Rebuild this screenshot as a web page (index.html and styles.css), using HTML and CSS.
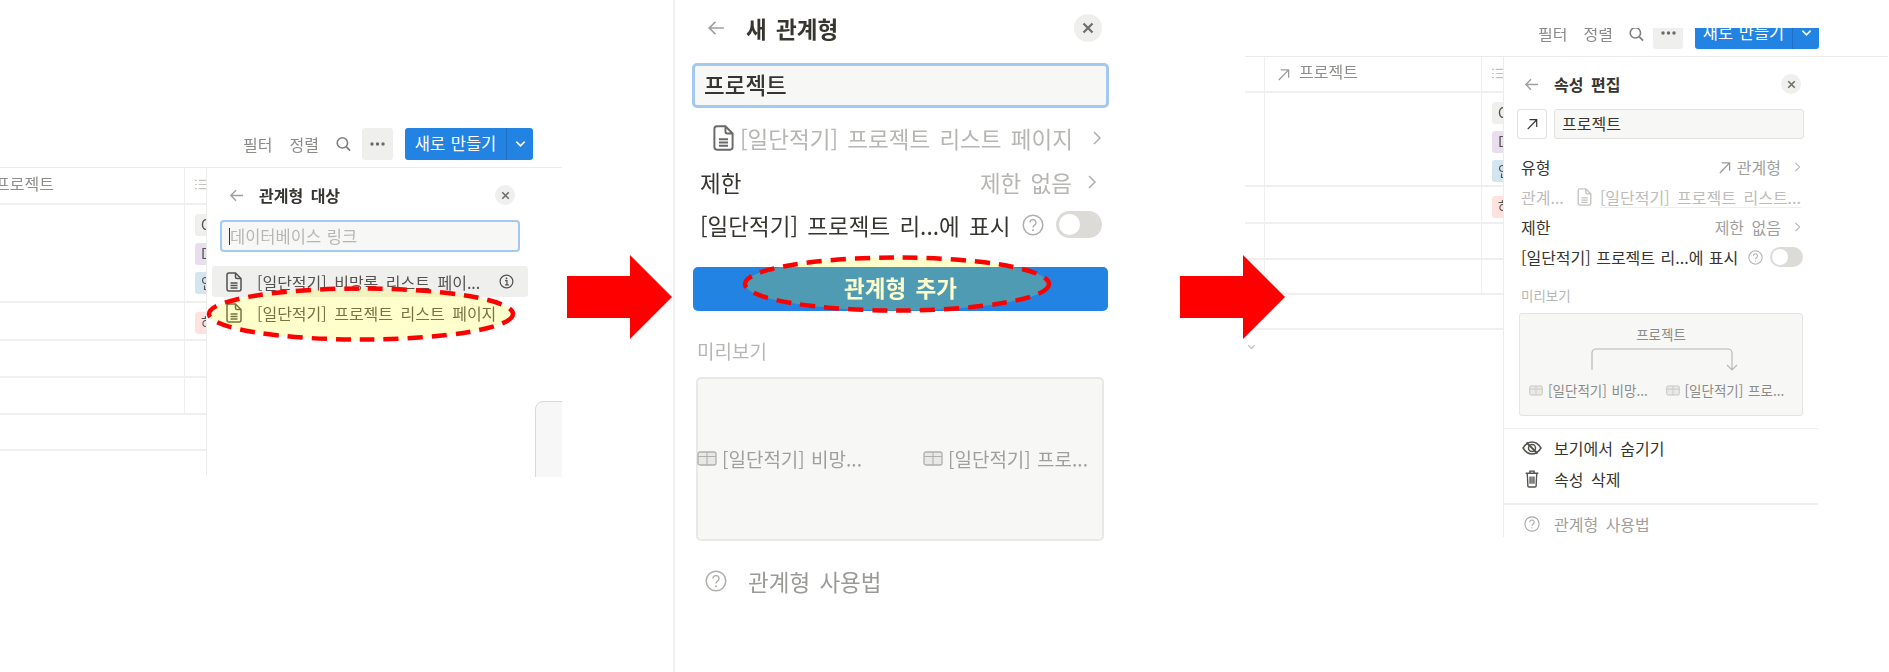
FILE: index.html
```html
<!DOCTYPE html>
<html lang="ko">

<head>
    <meta charset="utf-8">
    <title>관계형 추가</title>
    <link rel="stylesheet" href="styles.css">
</head>

<body>
    <svg class="defs" width="0" height="0">
        <symbol id="i-back" viewBox="0 0 16 16"><path d="M15 8H2M7.500 2.500 2 8l5.500 5.500" fill="none" stroke="currentColor" stroke-width="1.500"/></symbol>
        <symbol id="i-close" viewBox="0 0 16 16"><path d="M4 4l8 8M12 4l-8 8" fill="none" stroke="currentColor" stroke-width="2"/></symbol>
        <symbol id="i-doc" viewBox="0 0 16 20"><path d="M3 1h6.500L15 6.500V17a2 2 0 0 1-2 2H3a2 2 0 0 1-2-2V3a2 2 0 0 1 2-2zM9.500 1v4a1.500 1.500 0 0 0 1.500 1.500h4M4.500 11h7M4.500 13.500h7M4.500 16h7" fill="none" stroke="currentColor" stroke-width="1.500"/></symbol>
        <symbol id="i-chev" viewBox="0 0 10 16"><path d="M2 2l6 6-6 6" fill="none" stroke="currentColor" stroke-width="1.500"/></symbol>
        <symbol id="i-down" viewBox="0 0 12 8"><path d="M1.500 1.500 6 6l4.500-4.500" fill="none" stroke="currentColor" stroke-width="1.800"/></symbol>
        <symbol id="i-help" viewBox="0 0 22 22"><circle cx="11" cy="11" r="9.800" fill="none" stroke="currentColor" stroke-width="1.500"/><path d="M8 8.500a3 3 0 1 1 4.600 2.500c-1 .7-1.600 1.200-1.600 2.500" fill="none" stroke="currentColor" stroke-width="1.500"/><circle cx="11" cy="16.300" r="1" fill="currentColor"/></symbol>
        <symbol id="i-info" viewBox="0 0 16 16"><circle cx="8" cy="8" r="6.800" fill="none" stroke="currentColor" stroke-width="1.300"/><path d="M6.500 7H8.500V11.500M6.500 11.500h4" fill="none" stroke="currentColor" stroke-width="1.300"/><circle cx="8" cy="4.700" r="1" fill="currentColor"/></symbol>
        <symbol id="i-table" viewBox="0 0 20 15"><rect x="1" y="1" width="18" height="13" rx="2" fill="#e8e8e5" stroke="currentColor" stroke-width="1.300"/><path d="M1 5.500h18M10 1V14" fill="none" stroke="currentColor" stroke-width="1.100"/></symbol>
        <symbol id="i-rel" viewBox="0 0 14 14"><path d="M2 13 12.500 2M4 2h8.500v8.500" fill="none" stroke="currentColor" stroke-width="1.400"/></symbol>
        <symbol id="i-search" viewBox="0 0 16 16"><circle cx="6.800" cy="6.800" r="5.500" fill="none" stroke="currentColor" stroke-width="1.700"/><path d="M10.800 10.800 15 15" fill="none" stroke="currentColor" stroke-width="1.900"/></symbol>
        <symbol id="i-dots" viewBox="0 0 15 4"><circle cx="2" cy="2" r="1.700" fill="currentColor"/><circle cx="7.500" cy="2" r="1.700" fill="currentColor"/><circle cx="13" cy="2" r="1.700" fill="currentColor"/></symbol>
        <symbol id="i-list" viewBox="0 0 14 14"><path d="M4 2.500h10M4 7h10M4 11.500h10M0 2.500h2M0 7h2M0 11.500h2" fill="none" stroke="currentColor" stroke-width="1.300"/></symbol>
        <symbol id="i-eye" viewBox="0 0 20 16"><path d="M1 8c2.500-4 5.500-6 9-6s6.500 2 9 6c-2.500 4-5.500 6-9 6s-6.500-2-9-6z" fill="none" stroke="currentColor" stroke-width="1.500"/><circle cx="10" cy="8" r="3.500" fill="none" stroke="currentColor" stroke-width="1.500"/><path d="M4.500 2.500l11 11" fill="none" stroke="currentColor" stroke-width="1.800"/></symbol>
        <symbol id="i-trash" viewBox="0 0 14 18"><path d="M1 4h12M5 4V2h4v2M2.500 4l.6 12a1 1 0 0 0 1 1h5.800a1 1 0 0 0 1-1l.6-12M5.200 7v7M7 7v7M8.800 7v7" fill="none" stroke="currentColor" stroke-width="1.300"/></symbol>
    </svg>

    <div class="page">
        <!-- first capture: choosing the relation target -->
        <section class="shot shot-left">
            <div class="toolbar">
                <span class="tool-text">필터</span>
                <span class="tool-text">정렬</span>
                <svg class="tool-search"><use href="#i-search"/></svg>
                <span class="tool-more"><svg><use href="#i-dots"/></svg></span>
                <span class="new-btn"><span class="new-label">새로 만들기</span><span class="new-drop"><svg><use href="#i-down"/></svg></span></span>
            </div>
            <div class="work">
                <div class="table table-left">
                    <div class="tr tr-head">
                        <div class="td td-main"><span class="col-title col-clip">프로젝트</span></div>
                        <div class="td td-side"><svg class="list-icon"><use href="#i-list"/></svg></div>
                    </div>
                    <div class="tr tr-tall">
                        <div class="td td-main"></div>
                        <div class="td td-side tags">
                            <span class="tag tag-gray">O</span>
                            <span class="tag tag-purple">D</span>
                            <span class="tag tag-blue">인</span>
                        </div>
                    </div>
                    <div class="tr tr-a">
                        <div class="td td-main"></div>
                        <div class="td td-side tags"><span class="tag tag-red">하</span></div>
                    </div>
                    <div class="tr tr-b">
                        <div class="td td-main"></div>
                        <div class="td td-side"></div>
                    </div>
                    <div class="tr tr-b">
                        <div class="td td-main"></div>
                        <div class="td td-side"></div>
                    </div>
                    <div class="tr tr-c"></div>
                </div>
                <div class="panel panel-left">
                    <div class="head">
                        <svg class="back"><use href="#i-back"/></svg>
                        <span class="head-title">관계형 대상</span>
                        <span class="close"><svg><use href="#i-close"/></svg></span>
                    </div>
                    <div class="search-box"><span class="caret"></span><span>데이터베이스 링크</span></div>
                    <div class="pick pick-hover">
                        <svg class="pick-doc"><use href="#i-doc"/></svg>
                        <span class="pick-text">[일단적기] 비망록 리스트 페이...</span>
                        <svg class="pick-info"><use href="#i-info"/></svg>
                    </div>
                    <div class="pick">
                        <svg class="pick-doc"><use href="#i-doc"/></svg>
                        <span class="pick-text">[일단적기] 프로젝트 리스트 페이지</span>
                    </div>
                    <div class="float-card"></div>
                </div>
            </div>
        </section>

        <!-- second capture: new relation, zoomed in -->
        <section class="shot shot-mid">
            <div class="m-head">
                <svg class="m-back"><use href="#i-back"/></svg>
                <span class="m-title">새 관계형</span>
                <span class="m-close"><svg><use href="#i-close"/></svg></span>
            </div>
            <div class="m-input">프로젝트</div>
            <div class="m-row m-row-doc">
                <svg class="m-doc"><use href="#i-doc"/></svg>
                <span class="m-muted m-grow">[일단적기] 프로젝트 리스트 페이지</span>
                <svg class="m-chev"><use href="#i-chev"/></svg>
            </div>
            <div class="m-row m-row-limit">
                <span class="m-grow">제한</span>
                <span class="m-muted">제한 없음</span>
                <svg class="m-chev"><use href="#i-chev"/></svg>
            </div>
            <div class="m-row">
                <span>[일단적기] 프로젝트 리...에 표시</span>
                <svg class="m-help"><use href="#i-help"/></svg>
                <span class="toggle m-toggle"></span>
            </div>
            <div class="m-add">관계형 추가</div>
            <div class="m-label">미리보기</div>
            <div class="m-preview">
                <div class="m-link"><svg class="m-table"><use href="#i-table"/></svg>[일단적기] 비망...</div>
                <div class="m-link"><svg class="m-table"><use href="#i-table"/></svg>[일단적기] 프로...</div>
            </div>
            <div class="m-guide">
                <svg class="m-help"><use href="#i-help"/></svg>
                <span>관계형 사용법</span>
            </div>
        </section>

        <!-- third capture: the finished property -->
        <section class="shot shot-right">
            <div class="toolbar toolbar-cut">
                <span class="tool-text">필터</span>
                <span class="tool-text">정렬</span>
                <svg class="tool-search"><use href="#i-search"/></svg>
                <span class="tool-more"><svg><use href="#i-dots"/></svg></span>
                <span class="new-btn"><span class="new-label">새로 만들기</span><span class="new-drop"><svg><use href="#i-down"/></svg></span></span>
            </div>
            <div class="work">
                <div class="table table-right">
                    <div class="tr tr-head">
                        <div class="td td-stub"></div>
                        <div class="td td-main"><svg class="rel-icon"><use href="#i-rel"/></svg><span class="col-title">프로젝트</span></div>
                        <div class="td td-side"><svg class="list-icon"><use href="#i-list"/></svg></div>
                    </div>
                    <div class="tr tr-tall">
                        <div class="td td-stub"></div>
                        <div class="td td-main"></div>
                        <div class="td td-side tags">
                            <span class="tag tag-gray">O</span>
                            <span class="tag tag-purple">D</span>
                            <span class="tag tag-blue">인</span>
                        </div>
                    </div>
                    <div class="tr tr-a">
                        <div class="td td-stub"></div>
                        <div class="td td-main"></div>
                        <div class="td td-side tags"><span class="tag tag-red">하</span></div>
                    </div>
                    <div class="tr tr-b">
                        <div class="td td-stub"></div>
                        <div class="td td-main"></div>
                        <div class="td td-side"></div>
                    </div>
                    <div class="tr tr-b">
                        <div class="td td-stub"></div>
                        <div class="td td-main"></div>
                        <div class="td td-side"></div>
                    </div>
                    <div class="tr tr-c"></div>
                    <svg class="more-rows"><use href="#i-down"/></svg>
                </div>
                <div class="panel panel-right">
                    <div class="head">
                        <svg class="back"><use href="#i-back"/></svg>
                        <span class="head-title">속성 편집</span>
                        <span class="close"><svg><use href="#i-close"/></svg></span>
                    </div>
                    <div class="name-row">
                        <span class="name-icon"><svg><use href="#i-rel"/></svg></span>
                        <span class="name-input">프로젝트</span>
                    </div>
                    <div class="prop">
                        <span class="prop-grow">유형</span>
                        <svg class="prop-rel"><use href="#i-rel"/></svg>
                        <span class="muted">관계형</span>
                        <svg class="prop-chev"><use href="#i-chev"/></svg>
                    </div>
                    <div class="prop">
                        <span class="faint prop-key">관계...</span>
                        <svg class="prop-doc"><use href="#i-doc"/></svg>
                        <span class="faint prop-target">[일단적기] 프로젝트 리스트...</span>
                    </div>
                    <div class="prop">
                        <span class="prop-grow">제한</span>
                        <span class="muted">제한 없음</span>
                        <svg class="prop-chev"><use href="#i-chev"/></svg>
                    </div>
                    <div class="prop prop-show">
                        <span>[일단적기] 프로젝트 리...에 표시</span>
                        <svg class="prop-help"><use href="#i-help"/></svg>
                        <span class="toggle"></span>
                    </div>
                    <div class="prev-label">미리보기</div>
                    <div class="prev-card">
                        <div class="prev-name">프로젝트</div>
                        <svg class="prev-line" viewBox="0 0 144 24"><path d="M2 23V6a4 4 0 0 1 4-4h132a4 4 0 0 1 4 4v17M137 18l5 5 5-5" fill="none" stroke="#b9b8b5" stroke-width="1.200"/></svg>
                        <div class="prev-links">
                            <span class="prev-link"><svg><use href="#i-table"/></svg>[일단적기] 비망...</span>
                            <span class="prev-link"><svg><use href="#i-table"/></svg>[일단적기] 프로...</span>
                        </div>
                    </div>
                    <div class="action action-first"><svg class="action-eye"><use href="#i-eye"/></svg><span>보기에서 숨기기</span></div>
                    <div class="action action-last"><svg class="action-trash"><use href="#i-trash"/></svg><span>속성 삭제</span></div>
                    <div class="action action-guide"><svg class="action-help"><use href="#i-help"/></svg><span>관계형 사용법</span></div>
                </div>
            </div>
        </section>

        <!-- annotations drawn over the captures -->
        <svg class="mark arrow-one" viewBox="0 0 105 84"><path d="M0 21H63V0L105 42 63 84V63H0z" fill="#f00"/></svg>
        <svg class="mark arrow-two" viewBox="0 0 105 84"><path d="M0 21H63V0L105 42 63 84V63H0z" fill="#f00"/></svg>
        <svg class="mark ring-one" viewBox="0 0 310 56"><ellipse cx="155" cy="28" rx="152" ry="25.500" fill="rgba(255,255,0,.2)" stroke="#f00" stroke-width="4.500" stroke-dasharray="15 9"/></svg>
        <svg class="mark ring-two" viewBox="0 0 310 58"><ellipse cx="155" cy="29" rx="152" ry="26.500" fill="rgba(255,255,0,.2)" stroke="#f00" stroke-width="4.500" stroke-dasharray="15 9"/></svg>
    </div>
</body>

</html>
```

FILE: styles.css
```css
body {
    margin: 0;
    background-color: #fff;
    color: #37352f;
    font-family: "Noto Sans CJK KR", "Noto Sans", sans-serif;
    font-size: 16px;
    word-spacing: 3px;
    overflow: hidden;
}

svg {
    display: block;
    flex: none;
}

.defs {
    position: absolute;
}

.page {
    position: relative;
    display: flex;
    width: 1889px;
    height: 672px;
    overflow: hidden;
}

.shot {
    filter: blur(0.45px);
    overflow: hidden;
}

.shot-left {
    width: 562px;
    height: 349px;
    margin-top: 128px;
}

.shot-mid {
    width: 572px;
    height: 672px;
    margin-left: 111px;
    padding-left: 17px;
    box-sizing: border-box;
    border-left: 2px solid #efefef;
    font-size: 22.500px;
}

.shot-right {
    width: 643px;
    height: 509px;
    margin-top: 28px;
}

/* toolbar above the table */
.toolbar {
    display: flex;
    align-items: center;
    justify-content: flex-end;
    height: 40px;
    padding: 0 29px 8px 0;
    box-sizing: border-box;
    border-bottom: 1px solid #ebebe9;
}

.toolbar-cut {
    align-items: flex-end;
    height: 29px;
    padding: 0 69px 7px 0;
    overflow: hidden;
}

.toolbar-cut .tool-text {
    margin-right: 16px;
    margin-bottom: 4px;
}

.toolbar-cut .tool-search {
    margin-right: 9px;
    margin-bottom: 7px;
}

.toolbar-cut .tool-more {
    flex: none;
    width: 30px;
}

.toolbar-cut .new-btn {
    flex: none;
    width: 124px;
}

.tool-text {
    margin-right: 17px;
    color: #8c8b88;
}

.tool-search {
    width: 15px;
    height: 16px;
    margin-right: 11px;
    color: #7f7e7b;
}

.tool-more {
    display: flex;
    align-items: center;
    justify-content: center;
    width: 31px;
    height: 32px;
    margin-right: 12px;
    border-radius: 3px;
    background-color: #efefee;
    color: #6b6a67;
}

.tool-more svg {
    width: 15px;
    height: 4px;
}

.new-btn {
    display: flex;
    width: 128px;
    height: 32px;
    border-radius: 3px;
    background-color: #2383e2;
    color: #fff;
    font-size: 16.500px;
    line-height: 31px;
    word-spacing: 1px;
}

.new-label {
    flex: 1;
    text-align: center;
}

.new-drop {
    display: flex;
    align-items: center;
    justify-content: center;
    width: 26px;
    border-left: 1px solid #1c6fc2;
}

.new-drop svg {
    width: 11px;
    height: 8px;
}

/* table behind the side panel */
.work {
    display: flex;
    height: 100%;
}

.table {
    position: relative;
    flex: none;
}

.table-left {
    width: 206px;
}

.table-right {
    width: 258px;
}

.tr {
    display: flex;
    box-sizing: border-box;
    border-bottom: 2px solid #efefee;
}

.tr-head {
    height: 37px;
}

.tr-tall {
    height: 98px;
}

.tr-a {
    height: 38px;
}

.tr-b {
    height: 37px;
}

.tr-c {
    height: 36px;
}

.table-right .tr-head {
    height: 36px;
}

.table-right .tr-tall {
    height: 94px;
}

.table-right .tr-a {
    height: 37px;
}

.table-right .tr-b {
    height: 35.500px;
}

.table-right .tr-c {
    height: 35px;
}

.td {
    box-sizing: border-box;
    overflow: hidden;
}

.td-stub {
    width: 20px;
    border-right: 1px solid #efefee;
}

.td-main {
    display: flex;
    align-items: center;
    width: 185px;
    border-right: 1px solid #efefee;
}

.table-right .td-main {
    width: 217px;
}

.td-side {
    flex: 1;
    display: flex;
    align-items: center;
    padding-left: 10px;
}

.col-title {
    flex: none;
    color: #8f8e8b;
    line-height: 28px;
    margin-top: -6px;
}

.col-clip {
    margin-left: -5px;
}

.list-icon {
    width: 13px;
    height: 13px;
    margin-top: -2px;
    color: #c4c3c0;
}

.rel-icon {
    width: 13px;
    height: 13px;
    margin: 0 9px 0 12px;
    color: #9b9a97;
}

.tags {
    flex-direction: column;
    align-items: flex-start;
    justify-content: flex-start;
    padding-top: 9px;
}

.tag {
    display: block;
    flex: none;
    width: 40px;
    height: 22px;
    margin-bottom: 7px;
    padding-left: 6px;
    border-radius: 3px;
    box-sizing: border-box;
    color: #55534e;
    font-size: 14px;
    line-height: 21px;
}

.tag-gray {
    background-color: #efefed;
}

.tag-purple {
    background-color: #e8deee;
}

.tag-blue {
    background-color: #d3e5ef;
}

.tag-red {
    background-color: #ffe2dd;
}

.more-rows {
    width: 9px;
    height: 6px;
    margin: 14px 0 0 2px;
    color: #c4c3c0;
}

/* side panel */
.panel {
    position: relative;
    flex: 1;
    box-sizing: border-box;
    border-left: 1px solid #ececea;
    background-color: #fff;
}

.panel-right {
    flex: none;
    width: 315px;
    height: 481px;
    overflow: hidden;
}

.head {
    display: flex;
    align-items: center;
    height: 22px;
    margin-top: 16px;
    padding-left: 22px;
    padding-right: 47px;
}

.panel-right .head {
    padding-left: 20px;
    padding-right: 17px;
}

.back {
    width: 15px;
    height: 15px;
    margin-right: 15px;
    color: #a09f9c;
}

.head-title {
    flex: 1;
    font-weight: 700;
}

.close {
    display: flex;
    align-items: center;
    justify-content: center;
    width: 20px;
    height: 20px;
    border-radius: 50%;
    background-color: #efefee;
    color: #6f6e6b;
}

.close svg {
    width: 13px;
    height: 13px;
}

.search-box {
    display: flex;
    align-items: center;
    width: 300px;
    height: 32px;
    margin: 14px 0 14px 13px;
    padding-left: 7px;
    box-sizing: border-box;
    border: 2px solid #a3c9f0;
    border-radius: 4px;
    background-color: #f7f7f5;
    color: #b7b6b3;
    font-size: 16.500px;
    word-spacing: 1px;
}

.caret {
    width: 1px;
    height: 17px;
    background-color: #37352f;
}

.pick {
    display: flex;
    align-items: center;
    width: 316px;
    height: 31px;
    margin-left: 5px;
    padding-left: 14px;
    box-sizing: border-box;
    color: #55534e;
}

.pick-hover {
    background-color: #efefee;
    border-radius: 3px;
}

.pick-doc {
    width: 16px;
    height: 20px;
    margin-right: 15px;
    color: #55534e;
}

.pick-text {
    flex: 1;
    white-space: nowrap;
}

.pick-info {
    width: 15px;
    height: 15px;
    margin-right: 14px;
}

.float-card {
    position: absolute;
    left: 328px;
    top: 233px;
    width: 60px;
    height: 90px;
    border: 1px solid #d9d9d7;
    border-radius: 8px;
    background-color: #f7f7f7;
}

.name-row {
    display: flex;
    height: 30px;
    margin: 14px 0 0 13px;
}

.name-icon {
    display: flex;
    align-items: center;
    justify-content: center;
    width: 30px;
    box-sizing: border-box;
    border: 1px solid #e2e2e0;
    border-radius: 3px;
}

.name-icon svg {
    width: 12px;
    height: 12px;
}

.name-input {
    width: 250px;
    margin-left: 7px;
    padding-left: 7px;
    box-sizing: border-box;
    border: 1px solid #e2e2e0;
    border-radius: 3px;
    background-color: #f7f7f5;
    line-height: 26px;
}

.prop {
    display: flex;
    align-items: center;
    height: 30px;
    padding: 0 17px 0 17px;
    white-space: nowrap;
}

.name-row + .prop {
    margin-top: 13px;
}

.prop-show {
    padding-right: 15px;
    word-spacing: 1px;
}

.prop-grow {
    flex: 1;
}

.muted {
    color: #a09f9c;
}

.faint {
    color: #bdbcb9;
}

.prop-rel {
    width: 13px;
    height: 13px;
    margin-right: 6px;
    color: #9b9a97;
}

.prop-chev {
    width: 7px;
    height: 12px;
    margin-left: 13px;
    color: #b0afac;
}

.prop-key {
    width: 60px;
}

.prop-doc {
    width: 15px;
    height: 18px;
    margin-right: 8px;
    color: #c4c3c0;
}

.prop-target {
    flex: 1;
    border-bottom: 1px solid #efefee;
    line-height: 20px;
}

.prop-help {
    width: 15px;
    height: 15px;
    margin-left: 10px;
    color: #b0afac;
}

.toggle {
    position: relative;
    display: block;
    flex: none;
    width: 33px;
    height: 20px;
    margin-left: auto;
    border-radius: 10px;
    background-color: #dcdbd8;
}

.toggle::before {
    content: "";
    position: absolute;
    left: 2px;
    top: 2px;
    width: 16px;
    height: 16px;
    border-radius: 50%;
    background-color: #fff;
}

.prev-label {
    margin: 12px 0 0 17px;
    color: #b7b6b3;
    font-size: 13.500px;
    line-height: 22px;
}

.prev-card {
    width: 284px;
    height: 103px;
    margin: 7px 0 12px 15px;
    box-sizing: border-box;
    border: 1px solid #e4e4e2;
    border-radius: 3px;
    background-color: #f7f7f5;
    color: #8c8b88;
    font-size: 13.500px;
    word-spacing: 1px;
}

.prev-name {
    margin-top: 10px;
    line-height: 20px;
    text-align: center;
}

.prev-line {
    width: 146px;
    height: 24px;
    margin: 3px 0 0 69px;
    overflow: visible;
}

.prev-links {
    display: flex;
    margin-top: 9px;
    padding-left: 9px;
}

.prev-link {
    display: flex;
    align-items: center;
    width: 139px;
    line-height: 20px;
    white-space: nowrap;
}

.prev-link svg {
    width: 14px;
    height: 11px;
    margin-right: 5px;
    color: #c4c3c0;
}

.action {
    display: flex;
    align-items: center;
    height: 31px;
}

.action svg {
    margin-left: 18px;
    margin-right: 12px;
    width: 20px;
}

.action-first {
    padding-top: 3px;
    border-top: 1px solid #efefee;
}

.action-last {
    height: 42px;
    padding-bottom: 9px;
    box-sizing: border-box;
    border-bottom: 2px solid #efefee;
}

.action-guide {
    height: 38px;
    color: #a09f9c;
}

.action-eye {
    height: 16px;
    color: #55534e;
}

.action-trash {
    height: 19px;
    color: #55534e;
}

.action-help {
    height: 16px;
    color: #a9a8a5;
}

/* middle capture */
.m-head {
    display: flex;
    align-items: center;
    width: 417px;
    height: 28px;
    margin-top: 14px;
    padding-left: 13px;
    box-sizing: border-box;
}

.m-back {
    width: 22px;
    height: 18px;
    margin-right: 19px;
    color: #a09f9c;
}

.m-title {
    flex: 1;
    font-weight: 700;
}

.m-close {
    display: flex;
    align-items: center;
    justify-content: center;
    width: 28px;
    height: 28px;
    margin-right: 7px;
    border-radius: 50%;
    background-color: #efefee;
    color: #6f6e6b;
}

.m-close svg {
    width: 18px;
    height: 18px;
}

.m-input {
    width: 417px;
    height: 45px;
    margin-top: 21px;
    padding-left: 9px;
    box-sizing: border-box;
    border: 3px solid #a3c9f0;
    border-radius: 5px;
    background-color: #f7f7f5;
    font-weight: 500;
    line-height: 36px;
}

.m-row {
    display: flex;
    align-items: center;
    width: 417px;
    height: 43px;
    padding: 0 7px 0 8px;
    box-sizing: border-box;
    white-space: nowrap;
}

.m-row-doc {
    height: 44px;
    margin-top: 8px;
    padding-left: 21px;
}

.m-row-limit {
    padding-right: 12px;
}

.m-doc {
    width: 21px;
    height: 26px;
    margin-right: 6px;
    color: #6b6a67;
}

.m-grow {
    flex: 1;
}

.m-muted {
    color: #b7b6b3;
}

.m-chev {
    width: 10px;
    height: 16px;
    margin-left: 15px;
    color: #b0afac;
}

.m-help {
    width: 22px;
    height: 22px;
    margin-left: 12px;
    color: #b0afac;
}

.m-toggle {
    width: 46px;
    height: 27px;
    border-radius: 14px;
}

.m-toggle::before {
    left: 3px;
    top: 3px;
    width: 21px;
    height: 21px;
}

.m-add {
    width: 415px;
    height: 44px;
    margin: 21px 0 0 1px;
    border-radius: 5px;
    background-color: #2383e2;
    color: #fff;
    font-weight: 700;
    line-height: 40px;
    text-align: center;
}

.m-label {
    margin: 27px 0 0 5px;
    color: #b7b6b3;
    font-size: 19px;
    line-height: 26px;
}

.m-preview {
    display: flex;
    align-items: center;
    width: 408px;
    height: 164px;
    margin: 13px 0 0 4px;
    box-sizing: border-box;
    border: 2px solid #e8e8e6;
    border-radius: 5px;
    background-color: #f7f7f5;
    color: #a09f9c;
    font-size: 19px;
    word-spacing: 1px;
}

.m-link {
    display: flex;
    flex: none;
    align-items: center;
    width: 226px;
    margin-top: -2px;
    white-space: nowrap;
}

.m-link:first-child {
    margin-left: -1px;
}

.m-table {
    width: 20px;
    height: 15px;
    margin-right: 5px;
    color: #b0afac;
}

.m-guide {
    display: flex;
    align-items: center;
    height: 34px;
    margin-top: 23px;
    color: #9b9a97;
}

.m-guide .m-help {
    margin: 0 21px 0 13px;
}

/* annotations */
.mark {
    position: absolute;
}

.arrow-one {
    left: 567px;
    top: 255px;
    width: 105px;
    height: 84px;
}

.arrow-two {
    left: 1180px;
    top: 255px;
    width: 105px;
    height: 84px;
}

.ring-one {
    left: 206px;
    top: 286px;
    width: 310px;
    height: 56px;
}

.ring-two {
    left: 742px;
    top: 255px;
    width: 310px;
    height: 58px;
}
```
